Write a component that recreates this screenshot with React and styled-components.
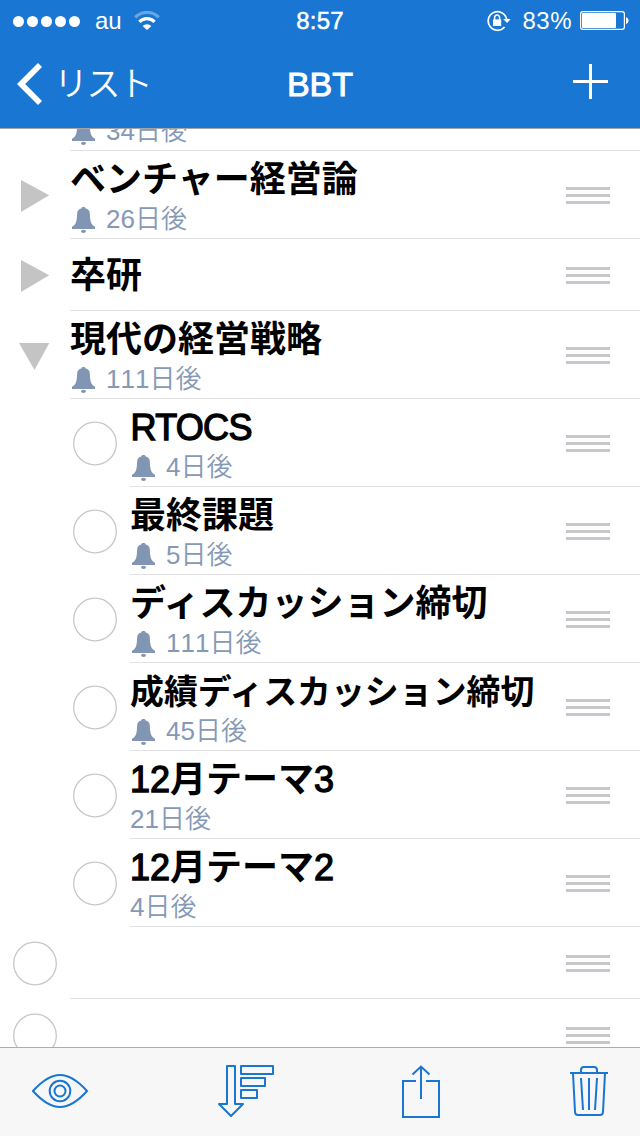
import React from "react";
import styled, { createGlobalStyle } from "styled-components";

const colors = {
  primary: "#1976d2",
  muted: "#8499b5",
  bell: "#8196b2",
  line: "#e1e1e3",
  control: "#c7c7cc",
  arrow: "#c4c4c4",
};

const tasks = [
  { id: 1, type: "closed", due: "34日後", bell: true },
  { id: 2, type: "closed", title: "ベンチャー経営論", due: "26日後", bell: true },
  { id: 3, type: "closed", title: "卒研" },
  { id: 4, type: "open", title: "現代の経営戦略", due: "111日後", bell: true },
  { id: 5, child: true, title: "RTOCS", due: "4日後", bell: true },
  { id: 6, child: true, title: "最終課題", due: "5日後", bell: true },
  { id: 7, child: true, title: "ディスカッション締切", due: "111日後", bell: true },
  {
    id: 8,
    child: true,
    title: "成績ディスカッション締切",
    due: "45日後",
    bell: true,
    small: true,
  },
  { id: 9, child: true, title: "12月テーマ3", due: "21日後" },
  { id: 10, child: true, title: "12月テーマ2", due: "4日後" },
  { id: 11 },
  { id: 12 },
];

const GlobalStyle = createGlobalStyle`
  * {
    box-sizing: border-box;
  }
  body {
    margin: 0;
    background: #fff;
    font-family: "Liberation Sans", "Noto Sans CJK JP", sans-serif;
    font-kerning: none;
  }
  svg {
    display: block;
    flex: none;
  }
`;

const Screen = styled.div`
  width: 640px;
  height: 1136px;
  display: flex;
  flex-direction: column;
  overflow: hidden;
`;

const Header = styled.header`
  flex: none;
  height: 129px;
  background: ${colors.primary};
  border-bottom: 1px solid #a5a5a5;
  color: #fff;
`;

const StatusBar = styled.div`
  height: 40px;
  padding: 0 11px 0 13px;
  display: grid;
  grid-template-columns: 1fr auto 1fr;
  align-items: center;
  font-size: 24px;
  line-height: 42px;
`;

const StatusGroup = styled.div`
  display: flex;
  align-items: center;
  justify-content: ${(p) => (p.$end ? "flex-end" : "flex-start")};
`;

const Dots = styled.div`
  display: flex;
  gap: 3px;
  margin-right: 15px;
  i {
    width: 11px;
    height: 11px;
    border-radius: 50%;
    background: #fff;
  }
`;

const Carrier = styled.span`
  margin-right: 12px;
`;

const Clock = styled.span`
  margin-right: 2px;
  letter-spacing: 0.2px;
  -webkit-text-stroke: 0.5px #fff;
`;

const Percent = styled.span`
  margin: 0 8px 0 11px;
  letter-spacing: 0.5px;
`;

const NavBar = styled.div`
  height: 88px;
  padding: 0 32px 0 16px;
  display: grid;
  grid-template-columns: 1fr auto 1fr;
  align-items: center;
`;

const Back = styled.div`
  display: flex;
  align-items: center;
  gap: 11px;
  font-size: 34px;
  font-weight: 350;
  line-height: 44px;
  span {
    letter-spacing: -1.6px;
  }
`;

const NavTitle = styled.h1`
  margin: 0 0 0 16px;
  font-size: 34px;
  font-weight: 400;
  line-height: 42px;
  -webkit-text-stroke: 1px #fff;
`;

const AddIcon = styled.svg`
  justify-self: end;
  margin-bottom: 5px;
`;

const List = styled.main`
  flex: 1;
  min-height: 0;
  overflow: hidden;
`;

/* the list is scrolled so that the first row is mostly under the header */
const Rows = styled.div`
  margin-top: -66px;
`;

const Row = styled.div`
  display: flex;
  height: ${(p) => (p.$tall ? 88 : 72)}px;
`;

const Lead = styled.div`
  flex: none;
  width: ${(p) => (p.$child ? 130 : 70)}px;
  padding-left: ${(p) => (p.$child ? 73 : 13)}px;
  display: flex;
  align-items: center;
`;

const Body = styled.div`
  flex: 1;
  min-width: 0;
  padding-right: 30px;
  border-bottom: 1px solid ${colors.line};
  display: flex;
  align-items: center;
  justify-content: space-between;
`;

const Title = styled.div`
  height: 44px;
  font-size: ${(p) => (p.$small ? 33.9 : 36)}px;
  font-weight: 700;
  font-kerning: normal;
  line-height: 46px;
  color: #000;
  white-space: nowrap;
`;

const Latin = styled.span`
  font-weight: 400;
  letter-spacing: ${(p) => (p.$tight ? -0.7 : 0)}px;
  margin-left: ${(p) => (p.$tight ? 0.5 : 0)}px;
  -webkit-text-stroke: 1.3px #000;
`;

const Due = styled.div`
  margin-top: 4px;
  display: flex;
  align-items: flex-start;
  font-size: 26px;
  font-weight: 350;
  line-height: 28px;
  color: ${colors.muted};
  svg {
    margin: 2px 11px 0 2px;
  }
`;

const Handle = styled.div`
  flex: none;
  width: 44px;
  padding-top: 1px;
  display: grid;
  gap: 4px;
  i {
    height: 3px;
    background: ${colors.control};
  }
`;

const Toolbar = styled.footer`
  flex: none;
  height: 89px;
  padding: 0 30px 0 32px;
  display: flex;
  align-items: center;
  gap: 128px;
  background: #f7f7f7;
  border-top: 1px solid #adadad;
`;

const ToolIcon = styled.svg`
  fill: none;
  stroke: ${colors.primary};
  stroke-width: 2;
`;

const Wifi = () => (
  <svg width="26" height="20" viewBox="0 0 26 20" fill="none" stroke="#fff">
    <path d="M1.2 6.4a16.6 16.6 0 0 1 23.6 0" strokeWidth="3.2" opacity=".35" />
    <path d="M5.4 10.8a10.8 10.8 0 0 1 15.2 0" strokeWidth="3.2" />
    <path d="M13 19l-4.4-4a6.4 6.4 0 0 1 8.8 0z" fill="#fff" stroke="none" />
  </svg>
);

const RotationLock = () => (
  <svg width="24" height="22" viewBox="0 0 24 22" fill="none" stroke="#fff">
    <path d="M19.6 9A9.3 9.3 0 1 0 17.6 17" strokeWidth="1.7" />
    <path d="M16.2 9h7.4L20 13z" fill="#fff" stroke="none" />
    <path d="M6 9.4h8.2v6.6H6z" fill="#fff" stroke="none" />
    <path d="M7.6 10V7.8a2.5 2.9 0 0 1 5 0V10" strokeWidth="1.5" />
  </svg>
);

const Battery = () => (
  <svg width="49" height="20" viewBox="0 0 49 20">
    <rect x=".6" y=".6" width="43.8" height="17.8" rx="2.4" fill="none" stroke="#fff" strokeWidth="1.2" />
    <rect x="2" y="2" width="34" height="15" rx="1" fill="#fff" />
    <path d="M46 6.2c3.4.8 3.4 6 0 6.8z" fill="#fff" />
  </svg>
);

const Bell = () => (
  <svg width="23" height="26" viewBox="0 0 23 26" fill={colors.bell}>
    <path d="M11.5 0c1.1 0 1.9.5 2.2 1.4 2.3.5 3.7 1.8 4 4.1.4 2.8.2 5.6.9 8.5.7 2.7 2 4.6 4.4 5.8V22H0v-2.2c2.4-1.2 3.7-3.1 4.4-5.8.7-2.9.5-5.7.9-8.5.3-2.3 1.7-3.6 4-4.1C9.6.5 10.4 0 11.5 0z" />
    <ellipse cx="11.5" cy="24.3" rx="2.5" ry="1.6" />
  </svg>
);

const Circle = () => (
  <svg width="44" height="46" viewBox="0 0 44 46">
    <circle cx="22" cy="23.5" r="21.3" fill="none" stroke={colors.control} strokeWidth="1.3" />
  </svg>
);

const Arrow = ({ open }) => (
  <svg width="44" height="44" viewBox="0 0 44 44" fill={colors.arrow}>
    {open ? <path d="M6 10h30.3L21.5 37z" /> : <path d="M8 7l28.2 15.2L8 39z" />}
  </svg>
);

/* latin runs are drawn lighter than the bold japanese glyphs */
const TitleText = ({ text }) =>
  text
    .split(/([A-Z0-9]+)/)
    .filter(Boolean)
    .map((part, idx) =>
      /^[A-Z0-9]/.test(part) ? (
        <Latin key={idx} $tight={/[A-Z]/.test(part)}>
          {part}
        </Latin>
      ) : (
        part
      )
    );

const TaskRow = ({ task }) => (
  <Row $tall={!!task.due}>
    <Lead $child={task.child}>
      {task.type ? <Arrow open={task.type === "open"} /> : <Circle />}
    </Lead>
    <Body>
      <div>
        <Title $small={task.small}>
          {task.title && <TitleText text={task.title} />}
        </Title>
        {task.due && (
          <Due>
            {task.bell && <Bell />}
            {task.due}
          </Due>
        )}
      </div>
      <Handle>
        <i />
        <i />
        <i />
      </Handle>
    </Body>
  </Row>
);

const App = () => {
  return (
    <Screen>
      <GlobalStyle />
      <Header>
        <StatusBar>
          <StatusGroup>
            <Dots>
              <i />
              <i />
              <i />
              <i />
              <i />
            </Dots>
            <Carrier>au</Carrier>
            <Wifi />
          </StatusGroup>
          <Clock>8:57</Clock>
          <StatusGroup $end>
            <RotationLock />
            <Percent>83%</Percent>
            <Battery />
          </StatusGroup>
        </StatusBar>
        <NavBar>
          <Back>
            <svg width="27" height="42" viewBox="0 0 27 42" fill="#fff">
              <path d="M22 0l4 4L9.2 21 26 38l-4 4L1 21z" />
            </svg>
            <span>リスト</span>
          </Back>
          <NavTitle>BBT</NavTitle>
          <AddIcon width="35" height="35" viewBox="0 0 35 35" fill="#fff">
            <path d="M16 0h3v16h16v3H19v16h-3V19H0v-3h16z" />
          </AddIcon>
        </NavBar>
      </Header>
      <List>
        <Rows>
          {tasks.map((task) => (
            <TaskRow key={task.id} task={task} />
          ))}
        </Rows>
      </List>
      <Toolbar>
        <ToolIcon width="58" height="54" viewBox="0 0 58 54">
          <path d="M1 26C10 16 18 10 28 10s18 6 27 16c-9 10-17 16-27 16S10 36 1 26z" />
          <circle cx="28" cy="26" r="10.3" />
          <circle cx="28" cy="26" r="5.5" />
        </ToolIcon>
        <ToolIcon width="56" height="54" viewBox="0 0 56 54" strokeLinejoin="round">
          <path d="M9 1h8v38h8L13 51 1 39h8z" />
          <path d="M23 1h32v8H23zM23 13h24v8H23zM23 25h16v8H23z" />
        </ToolIcon>
        <ToolIcon width="40" height="54" viewBox="0 0 40 54">
          <path d="M14 16H1v36h36V16H24" />
          <path d="M19 34V1.500M10.5 9.5L19 1.500l8.5 8" />
        </ToolIcon>
        <ToolIcon width="40" height="54" viewBox="0 0 40 54">
          <path d="M0 8h38M11 8V5q0-3 3-3h10q3 0 3 3v3" />
          <path d="M3 8l2 39q.2 3 3 3h22q2.8 0 3-3l2-39" />
          <path d="M11 13l2 32M19 13v32M27 13l-2 32" />
        </ToolIcon>
      </Toolbar>
    </Screen>
  );
};

export default App;
